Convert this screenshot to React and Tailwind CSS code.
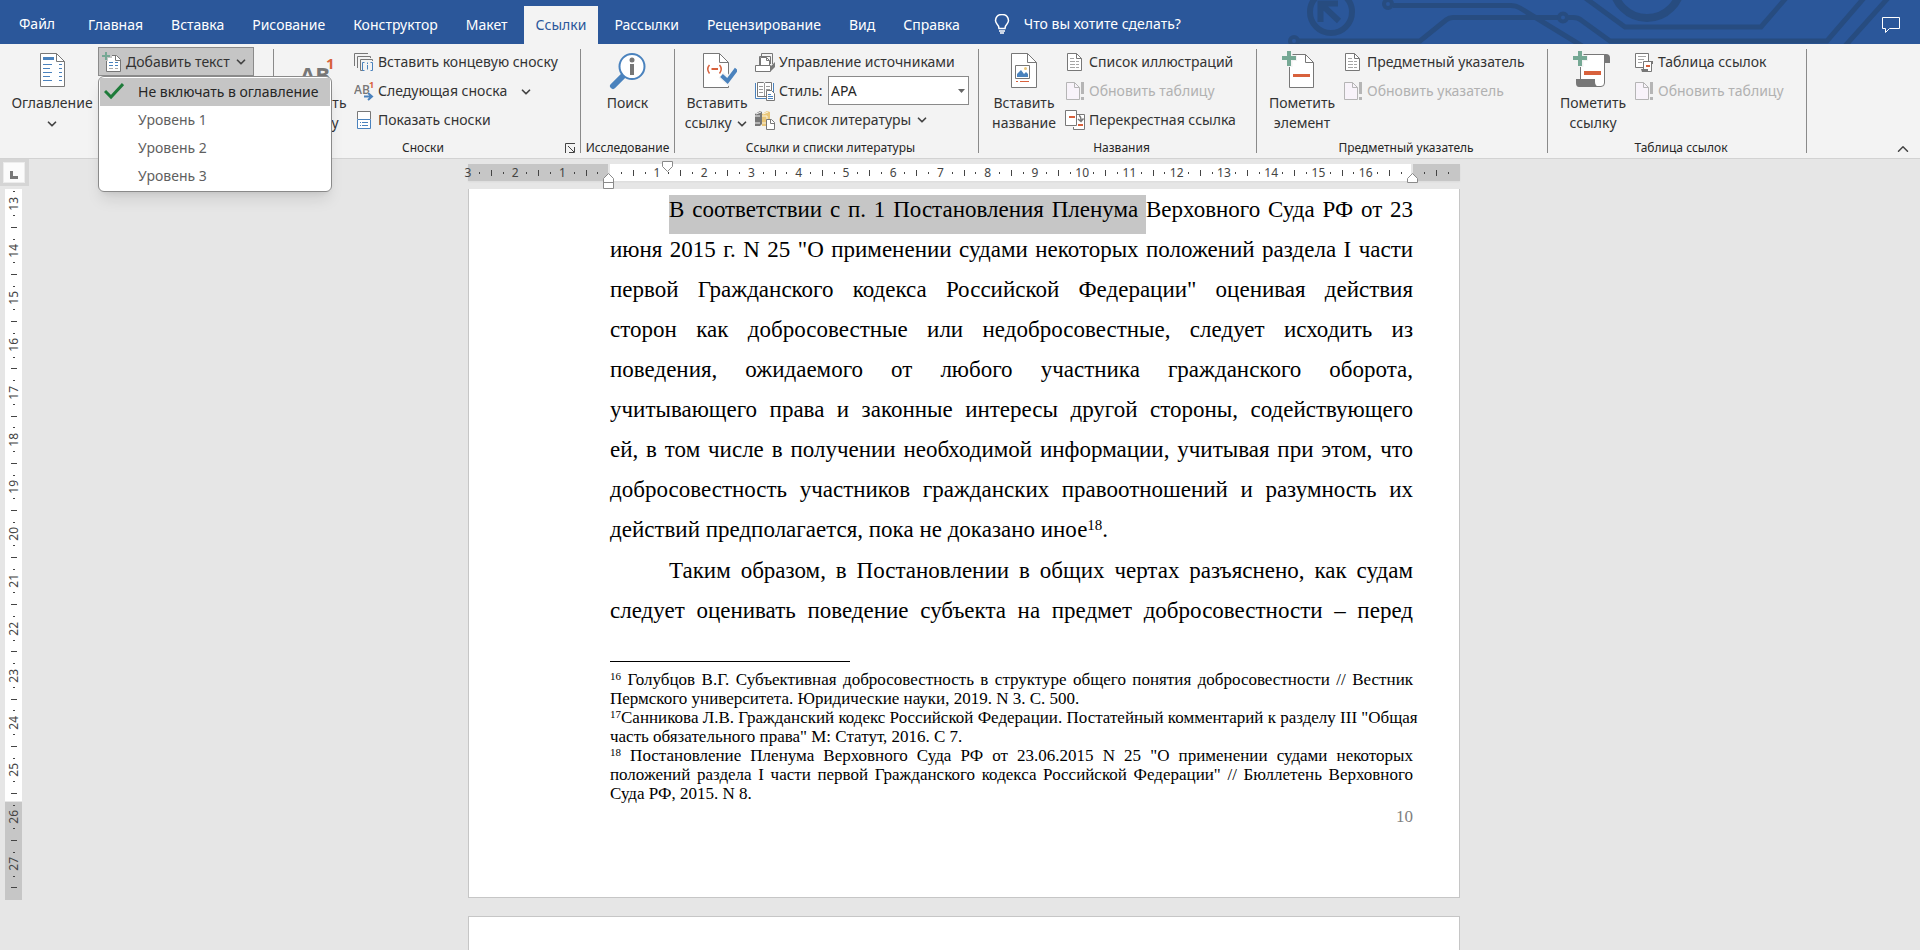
import { ChevronDown, ChevronUp } from "lucide-react";

const GRAY = "#777777";
const BLUE = "#4a82bd";
const RED = "#d8613c";
const GREEN = "#75a894";

const tabs = [
  "Главная",
  "Вставка",
  "Рисование",
  "Конструктор",
  "Макет",
  "Ссылки",
  "Рассылки",
  "Рецензирование",
  "Вид",
  "Справка",
];

const levels = ["Не включать в оглавление", "Уровень 1", "Уровень 2", "Уровень 3"];

const firstParagraph = [
  'июня 2015 г. N 25 "О применении судами некоторых положений раздела I части',
  'первой Гражданского кодекса Российской Федерации" оценивая действия',
  "сторон как добросовестные или недобросовестные, следует исходить из",
  "поведения, ожидаемого от любого участника гражданского оборота,",
  "учитывающего права и законные интересы другой стороны, содействующего",
  "ей, в том числе в получении необходимой информации, учитывая при этом, что",
  "добросовестность участников гражданских правоотношений и разумность их",
];

const footnotes = [
  {
    number: "16",
    lines: [
      { text: " Голубцов В.Г. Субъективная добросовестность в структуре общего понятия добросовестности // Вестник", justify: true },
      { text: "Пермского университета. Юридические науки, 2019. N 3. С. 500." },
    ],
  },
  {
    number: "17",
    lines: [
      { text: 'Санникова Л.В. Гражданский кодекс Российской Федерации. Постатейный комментарий к разделу III "Общая' },
      { text: 'часть обязательного права" М: Статут, 2016. С 7.' },
    ],
  },
  {
    number: "18",
    lines: [
      { text: ' Постановление Пленума Верховного Суда РФ от 23.06.2015 N 25 "О применении судами некоторых', justify: true },
      { text: 'положений раздела I части первой Гражданского кодекса Российской Федерации" // Бюллетень Верховного', justify: true },
      { text: "Суда РФ, 2015. N 8." },
    ],
  },
];

/* ---------- icons ---------- */

function Icon({ size = 20, children }) {
  return (
    <svg width={size} height={size} viewBox={`0 0 ${size} ${size}`} fill="none" className="shrink-0" aria-hidden="true">
      {children}
    </svg>
  );
}

function TocIcon() {
  return (
    <Icon size={40}>
      <path d="M8.5 3.5H24.5L32.5 11.5V36.5H8.5Z" fill="#fff" stroke={GRAY} />
      <path d="M24.5 3.5V11.5H32.5" stroke={GRAY} />
      <path d="M11 7H22V10H11Z" fill={BLUE} />
      <path d="M11 14.5H20M11 18.5H18M11 22.5H20M11 26.5H18M11 30.5H20M27 14.5H30M27 18.5H30M27 22.5H30M27 26.5H30M27 30.5H30" stroke={BLUE} />
    </Icon>
  );
}

function AddTextIcon() {
  return (
    <Icon>
      <path d="M4.5 3.5H14.5L18.5 7.5V19.5H4.5Z" fill="#fff" stroke={GRAY} />
      <path d="M13.5 3.5V8.5H18.5" stroke={GRAY} />
      <path d="M7 10.5H11M13 10.5H16M7 13.5H11M13 13.5H16" stroke={BLUE} />
      <path d="M7 16.5H11M13 16.5H16" stroke="#aaa" />
      <path d="M0 4H10M4 0V9" stroke="#c5c5c5" strokeWidth="4" />
      <path d="M0 4H8M4 0V8" stroke={GREEN} strokeWidth="2" />
    </Icon>
  );
}

function FootnoteIcon() {
  return (
    <Icon size={40}>
      <text x="4" y="33" fontSize="22" fontWeight="700" fill={GRAY} fontFamily="Open Sans, sans-serif">AB</text>
      <text x="30" y="19" fontSize="15" fontWeight="700" fill={RED} fontFamily="Open Sans, sans-serif">1</text>
    </Icon>
  );
}

function EndnoteIcon() {
  return (
    <Icon>
      <path d="M0.5 14V1.5H14M3.5 16V4.5H16.5V6M9 18.5H6.5V7.5H18.5V9" stroke={GRAY} />
      <path d="M10.5 10.5H8.5V18.5H10.5M16.5 10.5H18.5V18.5H16.5" stroke={BLUE} />
      <path d="M13.5 13V17.5M13.5 10.5V12" stroke={BLUE} />
    </Icon>
  );
}

function NextNoteIcon() {
  return (
    <Icon>
      <text x="0" y="13" fontSize="12" fontWeight="600" fill={GRAY} fontFamily="Open Sans, sans-serif">AB</text>
      <text x="15" y="7" fontSize="9" fontWeight="700" fill={RED} fontFamily="Open Sans, sans-serif">1</text>
      <path d="M9 15.5H18M14 12L18 15.5L14 19" stroke="#f3f3f3" strokeWidth="4" />
      <path d="M10 15.5H18M14 12L18 15.5L14 19" stroke={BLUE} strokeWidth="2" />
    </Icon>
  );
}

function ShowNotesIcon() {
  return (
    <Icon>
      <path d="M3.5 9V1.5H16.5V9" fill="#fff" stroke={GRAY} />
      <path d="M3.5 9.5H16.5V18.5H3.5Z" fill="#fff" stroke={BLUE} />
      <path d="M6 12.5H7M8 12.5H14M6 15.5H7M8 15.5H14" stroke={BLUE} />
    </Icon>
  );
}

function SearchInfoIcon() {
  return (
    <Icon size={40}>
      <path d="M15 26L5 36" stroke={BLUE} strokeWidth="6" strokeLinecap="round" />
      <circle cx="24" cy="16.5" r="12.5" fill="#fff" stroke={BLUE} strokeWidth="2" />
      <circle cx="24" cy="10" r="2.5" fill={GRAY} />
      <path d="M22 14H26V25H22Z" fill={GRAY} />
    </Icon>
  );
}

function CitationIcon() {
  return (
    <Icon size={40}>
      <path d="M6.5 3.5H22.5L31.5 12.5V37.5H6.5Z" fill="#fff" stroke={GRAY} />
      <path d="M22.5 3.5V12.5H31.5" stroke={GRAY} />
      <path d="M12.5 15Q9 19 12.5 23.5M22.5 15Q26 19 22.5 23.5" stroke={RED} strokeWidth="1.5" />
      <path d="M14.5 19H21" stroke={RED} strokeWidth="2" />
      <path d="M24 25L31 31L40 18" stroke="#f3f3f3" strokeWidth="7" />
      <path d="M24.5 25.5L30.5 31L39.5 19" stroke={BLUE} strokeWidth="4" />
    </Icon>
  );
}

function SourcesIcon() {
  return (
    <Icon>
      <path d="M6.5 5V1.5H17.5V12M4.5 13V4.5H15.5V12" stroke={GRAY} />
      <path d="M5.5 14V5.5H11.5L14.5 8.5V14" fill="#fff" stroke={GRAY} />
      <path d="M11.5 5.5V8.5H14.5" stroke={GRAY} />
      <path d="M0.5 13.5H15.5V19.5H0.5Z" fill="#fff" stroke={GRAY} />
      <path d="M16 14L20 10V15L16 19Z" fill={GRAY} />
    </Icon>
  );
}

function StyleIcon() {
  return (
    <Icon>
      <path d="M0.5 2V17.5H18.5V2" fill="#fff" stroke={BLUE} />
      <path d="M2.5 1.5H8.5L9.5 2.5L10.5 1.5H16.5V15.5H2.5Z" fill="#fff" stroke={GRAY} />
      <path d="M9.5 3V15M4 5.5H8M4 8.5H8M4 11.5H8M11 5.5H15M11 8.5H15" stroke="#999" />
      <path d="M11.5 9.5H16.5L19.5 12.5V19.5H11.5Z" fill="#fff" stroke={GRAY} />
      <path d="M13 13.5H16M13 15.5H18M13 17.5H18" stroke={BLUE} />
    </Icon>
  );
}

function BibliographyIcon() {
  return (
    <Icon>
      <path d="M0 4L5 1L7 2V14L5 16H0Z" fill={GRAY} />
      <path d="M1 4L6 2M0 6H5M0 13H5" stroke="#f3f3f3" />
      <path d="M7 4L12 1L15 2V12L12 16H7Z" fill="#e9c679" />
      <path d="M8 4L13 2M7 6H12M7 13H11M12 6V10" stroke="#fbf3e0" />
      <path d="M11.5 9.5H16.5L19.5 12.5V19.5H11.5Z" fill="#fff" stroke={GRAY} />
      <path d="M15.5 9.5V13.5H19.5" stroke={GRAY} />
    </Icon>
  );
}

function CaptionIcon() {
  return (
    <Icon size={40}>
      <path d="M7.5 3.5H23.5L32.5 12.5V37.5H7.5Z" fill="#fff" stroke={GRAY} />
      <path d="M23.5 3.5V12.5H32.5" stroke={GRAY} />
      <path d="M11.5 15.5H25.5V28.5H11.5Z" stroke={GRAY} />
      <path d="M13 27V24L17 20L20 24L22 22L24 24V27Z" fill={BLUE} />
      <circle cx="21.5" cy="18.5" r="1.5" fill="#e9c679" />
      <path d="M12 31.5H14M16 31.5H25" stroke={RED} />
    </Icon>
  );
}

function ListPageIcon() {
  return (
    <Icon>
      <path d="M2.5 1.5H11.5L16.5 6.5V18.5H2.5Z" fill="#fff" stroke={GRAY} />
      <path d="M11.5 1.5V6.5H16.5" stroke={GRAY} />
      <path d="M5 6.5H9M5 9.5H10M11 9.5H14M5 12.5H10M11 12.5H14M5 15.5H10M11 15.5H14" stroke="#a5a5a5" />
    </Icon>
  );
}

function RefreshPageIcon() {
  return (
    <Icon>
      <path d="M1.5 1.5H9.5L14.5 6.5V18.5H1.5Z" fill="#f8f3fa" stroke="#b5b5b5" />
      <path d="M9.5 1.5V6.5H14.5" stroke="#b5b5b5" />
      <path d="M16 1H19V13H16ZM16 16H19V19H16Z" fill="#b5b5b5" />
    </Icon>
  );
}

function CrossRefIcon() {
  return (
    <Icon>
      <path d="M9.5 4.5H19.5V19.5H8.5V17" fill="#fff" stroke={GRAY} />
      <path d="M0.5 0.5H11.5V15.5H0.5Z" fill="#fff" stroke={GRAY} />
      <path d="M4 7H10M13 15H18" stroke={RED} strokeWidth="2" />
      <path d="M14 5.5Q16 6 16 11M13 9L16 11.5L18.5 8.5" stroke={GRAY} strokeWidth="1.5" />
    </Icon>
  );
}

function MarkEntryIcon() {
  return (
    <Icon size={40}>
      <path d="M7.5 4.5H23.5L31.5 12.5V37.5H7.5Z" fill="#fff" stroke={GRAY} />
      <path d="M23.5 4.5V12.5H31.5" stroke={GRAY} />
      <path d="M11 25.5H28" stroke={RED} strokeWidth="3" />
      <path d="M0 8H15M7.5 0V17" stroke="#f3f3f3" strokeWidth="6" />
      <path d="M0 8H14M7 1V16" stroke={GREEN} strokeWidth="4" />
    </Icon>
  );
}

function MarkCitationIcon() {
  return (
    <Icon size={40}>
      <path d="M30 4H33Q37 4 37 8V13H32Z" fill={GRAY} />
      <path d="M7.5 30V4.5H31.5V33Q31.5 36.5 28 36.5H20Z" fill="#fff" stroke={GRAY} />
      <path d="M3 29H22V32Q22 36 26 37H6Q3 37 3 33Z" fill={GRAY} />
      <path d="M11 23H28" stroke={RED} strokeWidth="4" />
      <path d="M0 8H15M7.5 0V17" stroke="#f3f3f3" strokeWidth="6" />
      <path d="M0 8H14M7 1V16" stroke={GREEN} strokeWidth="4" />
    </Icon>
  );
}

function AuthoritiesIcon() {
  return (
    <Icon>
      <path d="M1.5 1.5H14.5V15.5H1.5Z" fill="#fff" stroke={GRAY} />
      <path d="M4 4.5H12M4 7.5H10M4 10.5H8" stroke="#a5a5a5" />
      <path d="M9.5 17V9.5H17.5V19.5H10" fill="#fff" stroke={GRAY} />
      <path d="M17 9H19V12H17ZM7 17H14V20H8Z" fill={GRAY} />
      <path d="M12 14H16" stroke={RED} strokeWidth="2" />
    </Icon>
  );
}

function CheckIcon() {
  return (
    <Icon>
      <path d="M1 9L7 15L19 2" stroke="#1e7b3a" strokeWidth="3" />
    </Icon>
  );
}

function BulbIcon() {
  return (
    <Icon>
      <path d="M7 14.5Q7 12 5 10Q3.5 8 3.5 6.5Q4 0.5 10 0.5Q16 0.5 16.5 6.5Q16.5 8 15 10Q13 12 13 14.5Z" stroke="#fff" strokeWidth="1.5" />
      <path d="M7 17H13M8 19H12" stroke="#fff" strokeWidth="1.5" />
    </Icon>
  );
}

/* ---------- title bar ---------- */

function CircuitArt() {
  return (
    <svg width="640" height="44" viewBox="1280 0 640 44" fill="none" stroke="#274c80" strokeWidth="5" className="absolute top-0 right-0" aria-hidden="true">
      <circle cx="1331" cy="12" r="21" strokeWidth="6" />
      <path d="M1338 3.5H1320.5V22M1321 4L1339 21" strokeWidth="6" />
      <circle cx="1388" cy="4" r="4" strokeWidth="4" />
      <path d="M1393 5.5H1511Q1516 5.5 1520 8L1582 46" />
      <circle cx="1294" cy="41" r="4" strokeWidth="4" />
      <path d="M1299 41H1420L1446 20Q1449 17.5 1453 17.5H1558" />
      <circle cx="1563" cy="17.5" r="4" strokeWidth="4" />
      <path d="M1568 17.5H1573Q1578 17.5 1581 20L1610 41H1827L1864 -2" />
      <path d="M1584 -3L1625 27H1761L1786 -2M1845 46L1888 -2" />
      <circle cx="1647" cy="-16" r="34" strokeWidth="8" />
    </svg>
  );
}

function TitleBar() {
  return (
    <header className="relative h-11 bg-[#2b579a] text-white">
      <CircuitArt />
      <div className="relative flex h-full items-stretch pt-1.5 text-sm">
        <button type="button" className="w-[76px] pr-0.5 pb-0.5">Файл</button>
        <nav className="flex gap-1">
          {tabs.map((tab) => (
            <button
              key={tab}
              type="button"
              className={tab === "Ссылки" ? "bg-[#f3f3f3] px-3 text-[#2b579a]" : "px-3"}
            >
              {tab}
            </button>
          ))}
        </nav>
        <button type="button" className="ml-5 flex items-center gap-3 pb-0.5">
          <BulbIcon />
          Что вы хотите сделать?
        </button>
        <button type="button" aria-label="Примечания" className="mr-5 ml-auto">
          <svg width="18" height="18" viewBox="0 0 18 18" fill="none" stroke="#fff" aria-hidden="true">
            <path d="M0.5 1.5H17.5V12.5H7.5L3.5 16.5V12.5H0.5Z" />
          </svg>
        </button>
      </div>
    </header>
  );
}

/* ---------- ribbon ---------- */

function Chevron() {
  return <ChevronDown size={14} strokeWidth={3} className="inline shrink-0 text-[#444]" />;
}

function Group({ title, width, launcher, children }) {
  return (
    <>
      <section className={`flex flex-col pt-[3px] ${width}`}>
        <div className="flex h-[87px] items-start gap-1">{children}</div>
        <div className="mt-1 flex h-5 items-center text-xs text-[#262626]">
          <span className="flex-1 text-center">{title}</span>
          {launcher && (
            <button type="button" aria-label="Параметры сносок" className="pr-1">
              <svg width="12" height="12" viewBox="0 0 12 12" fill="none" stroke="#444" aria-hidden="true">
                <path d="M1.5 11V1.5H11M4 4L10 10M10.5 5V10.5H5" />
              </svg>
            </button>
          )}
        </div>
      </section>
      <div className="my-[5px] w-px bg-[#8a8a8a]" />
    </>
  );
}

function BigButton({ icon, width, children }) {
  return (
    <button type="button" className={`flex shrink-0 flex-col items-center gap-[3px] pt-[3px] leading-5 ${width}`}>
      {icon}
      <span className="whitespace-nowrap">{children}</span>
    </button>
  );
}

function SmallButton({ icon, label, disabled, children }) {
  return (
    <button
      type="button"
      disabled={disabled}
      className="flex h-[29px] items-center gap-1 whitespace-nowrap disabled:text-[#b1b1b1]"
    >
      {icon}
      {label}
      {children}
    </button>
  );
}

function AddTextMenu() {
  return (
    <ul
      role="menu"
      className="absolute top-[29px] left-0 z-10 w-[234px] rounded-md border border-[#8a8a8a] bg-white p-px shadow-lg"
    >
      {levels.map((level, index) => (
        <li key={level} role="none">
          <button
            type="button"
            role="menuitemradio"
            aria-checked={index === 0}
            className={`flex h-7 w-full items-center gap-3.5 pl-1 whitespace-nowrap ${
              index === 0 ? "bg-[#c5c5c5] text-[#262626]" : "text-[#5f5f5f]"
            }`}
          >
            <span className="w-5">{index === 0 && <CheckIcon />}</span>
            {level}
          </button>
        </li>
      ))}
    </ul>
  );
}

function Ribbon() {
  return (
    <div className="flex h-[115px] border-b border-[#d2d2d2] bg-[#f3f3f3] text-sm text-[#333]">
      <Group width="w-[273px] pl-2.5">
        <BigButton icon={<TocIcon />} width="w-[84px]">
          Оглавление
          <br />
          <Chevron />
        </BigButton>
        <div className="relative">
          <button
            type="button"
            aria-haspopup="menu"
            aria-expanded="true"
            className="flex h-[29px] w-[156px] items-center gap-1 border border-[#8a8a8a] bg-[#c5c5c5] pl-[3px] whitespace-nowrap"
          >
            <AddTextIcon />
            Добавить текст
            <Chevron />
          </button>
          <AddTextMenu />
        </div>
      </Group>

      <Group title="Сноски" width="w-[306px] pl-2" launcher>
        <BigButton icon={<FootnoteIcon />} width="w-[68px]">
          Вставить
          <br />
          сноску
        </BigButton>
        <div>
          <SmallButton icon={<EndnoteIcon />} label="Вставить концевую сноску" />
          <SmallButton icon={<NextNoteIcon />} label="Следующая сноска">
            <span className="ml-2"><Chevron /></span>
          </SmallButton>
          <SmallButton icon={<ShowNotesIcon />} label="Показать сноски" />
        </div>
      </Group>

      <Group title="Исследование" width="w-[93px]">
        <BigButton icon={<SearchInfoIcon />} width="w-full">Поиск</BigButton>
      </Group>

      <Group title="Ссылки и списки литературы" width="w-[303px] pl-2">
        <BigButton icon={<CitationIcon />} width="w-[68px]">
          Вставить
          <br />
          ссылку <Chevron />
        </BigButton>
        <div>
          <SmallButton icon={<SourcesIcon />} label="Управление источниками" />
          <div className="flex h-[29px] items-center gap-1">
            <StyleIcon />
            <label htmlFor="citation-style" className="w-[45px]">Стиль:</label>
            <div className="grid w-[141px] items-center">
              <select
                id="citation-style"
                className="col-start-1 row-start-1 h-[29px] appearance-none border border-[#8a8a8a] bg-white pl-0.5 text-[#262626]"
              >
                <option>APA</option>
              </select>
              <svg width="7" height="4" viewBox="0 0 7 4" className="pointer-events-none col-start-1 row-start-1 mr-1 justify-self-end" aria-hidden="true">
                <path d="M0 0H7L3.5 4Z" fill="#666" />
              </svg>
            </div>
          </div>
          <SmallButton icon={<BibliographyIcon />} label="Список литературы">
            <Chevron />
          </SmallButton>
        </div>
      </Group>

      <Group title="Названия" width="w-[277px] pl-2">
        <BigButton icon={<CaptionIcon />} width="w-[74px]">
          Вставить
          <br />
          название
        </BigButton>
        <div>
          <SmallButton icon={<ListPageIcon />} label="Список иллюстраций" />
          <SmallButton icon={<RefreshPageIcon />} label="Обновить таблицу" disabled />
          <SmallButton icon={<CrossRefIcon />} label="Перекрестная ссылка" />
        </div>
      </Group>

      <Group title="Предметный указатель" width="w-[290px] pl-2">
        <BigButton icon={<MarkEntryIcon />} width="w-[74px]">
          Пометить
          <br />
          элемент
        </BigButton>
        <div>
          <SmallButton icon={<ListPageIcon />} label="Предметный указатель" />
          <SmallButton icon={<RefreshPageIcon />} label="Обновить указатель" disabled />
        </div>
      </Group>

      <Group title="Таблица ссылок" width="w-[258px] pl-2">
        <BigButton icon={<MarkCitationIcon />} width="w-[74px]">
          Пометить
          <br />
          ссылку
        </BigButton>
        <div>
          <SmallButton icon={<AuthoritiesIcon />} label="Таблица ссылок" />
          <SmallButton icon={<RefreshPageIcon />} label="Обновить таблицу" disabled />
        </div>
      </Group>

      <button type="button" aria-label="Свернуть ленту" className="mr-2 ml-auto self-end">
        <ChevronUp size={18} className="text-[#444]" />
      </button>
    </div>
  );
}

/* ---------- rulers ---------- */

// One cell per quarter of a centimetre: number, dot, dash, dot.
function Ticks({ from, to, hidden = [], vertical }) {
  const cells = [];
  for (let q = from; q <= to; q++) cells.push(q);

  return cells.map((q) => {
    const part = Math.abs(q) % 4;
    let mark = null;
    if (part === 0 && !hidden.includes(q)) {
      mark = (
        <span className={vertical ? "rotate-180 [writing-mode:vertical-rl]" : ""}>{Math.abs(q) / 4}</span>
      );
    } else if (part === 2) {
      mark = <span className={vertical ? "h-px w-1.5 bg-[#444]" : "h-1.5 w-px bg-[#444]"} />;
    } else if (part !== 0) {
      mark = <span className={vertical ? "h-px w-0.5 bg-[#444]" : "h-0.5 w-px bg-[#444]"} />;
    }
    return (
      <span key={q} className="flex min-h-0 min-w-0 flex-1 basis-0 items-center justify-center">
        {mark}
      </span>
    );
  });
}

function HorizontalRuler() {
  return (
    <div className="relative mt-[5px] grid h-4 w-[1004px] text-xs leading-[17px] text-[#444]">
      <div className="col-start-1 row-start-1 ml-1.5 mr-1.5 flex gap-0.5 shadow-xs">
        <div className="w-[140px] bg-[#c6c6c6]" />
        <div className="flex-1 bg-white" />
        <div className="w-[47px] bg-[#c6c6c6]" />
      </div>
      <div className="col-start-1 row-start-1 mr-3 flex">
        <Ticks from={-12} to={71} hidden={[0, 68]} />
      </div>
      <svg width="12" height="11" viewBox="0 0 12 11" className="absolute -top-[3px] left-[200px]" aria-hidden="true">
        <path d="M0.5 0.5H10.5V5.5L5.5 10.5L0.5 5.5Z" fill="#fff" stroke="#8a8a8a" />
      </svg>
      <svg width="12" height="17" viewBox="0 0 12 17" className="absolute top-[9px] left-[141px]" aria-hidden="true">
        <path d="M0.5 15.5V5.5L5.5 0.5L10.5 5.5V15.5ZM0.5 9.5H10.5" fill="#fff" stroke="#8a8a8a" />
      </svg>
      <svg width="12" height="11" viewBox="0 0 12 11" className="absolute top-[9px] left-[945px]" aria-hidden="true">
        <path d="M0.5 9.5V5.5L5.5 0.5L10.5 5.5V9.5Z" fill="#fff" stroke="#8a8a8a" />
      </svg>
    </div>
  );
}

function VerticalRuler() {
  return (
    <aside className="w-[29px] shrink-0">
      <button type="button" aria-label="Позиция табуляции" className="flex h-[27px] w-full items-center bg-[#d5d5d5] pl-[3px]">
        <span className="flex h-[21px] w-[22px] items-center justify-center border border-[#ececec] bg-[#fbfbfb]">
          <svg width="8" height="8" viewBox="0 0 8 8" className="mt-1" aria-hidden="true">
            <path d="M1.5 0V6.5H8" stroke="#777" strokeWidth="3" fill="none" />
          </svg>
        </span>
      </button>
      <div className="ml-[5px] grid h-[714px] w-[17px] text-xs leading-4 text-[#444]">
        <div className="col-start-1 row-start-1 mt-[3px] flex flex-col gap-px">
          <div className="flex-1 bg-white" />
          <div className="h-[98px] bg-[#c6c6c6]" />
        </div>
        <div className="col-start-1 row-start-1 mb-1.5 ml-px flex flex-col">
          <Ticks from={51} to={110} vertical />
        </div>
      </div>
    </aside>
  );
}

/* ---------- document ---------- */

const full = "[text-align-last:justify]";

function Footnote({ number, lines }) {
  return (
    <li>
      {lines.map((line, index) => (
        <span key={line.text} className={`block whitespace-nowrap ${line.justify ? full : ""}`}>
          {index === 0 && <sup className="text-[11px] leading-none">{number}</sup>}
          {line.text}
        </span>
      ))}
    </li>
  );
}

function Page() {
  return (
    <article className="h-[709px] w-[992px] border border-t-0 border-[#c6c6c6] bg-white pr-[46px] pl-[141px] font-['Liberation_Serif','Times_New_Roman',serif] text-black">
      <div className="pt-px text-[23px] leading-10">
        <p>
          <span className={`block pl-[59px] ${full}`}>
            <mark className="bg-[#c6c6c6] pt-0.5 pb-3 text-black">В соответствии с п. 1 Постановления Пленума </mark>
            Верховного Суда РФ от 23
          </span>
          {firstParagraph.map((line) => (
            <span key={line} className={`block ${full}`}>{line}</span>
          ))}
          <span className="block">
            действий предполагается, пока не доказано иное
            <sup className="text-[15px] leading-none">18</sup>.
          </span>
        </p>
        <p className="mt-px">
          <span className={`block pl-[59px] ${full}`}>Таким образом, в Постановлении в общих чертах разъяснено, как судам</span>
          <span className={`block ${full}`}>следует оценивать поведение субъекта на предмет добросовестности – перед</span>
        </p>
      </div>
      <hr className="mt-[30px] w-60 border-black" />
      <ol className="mt-2 text-[17px] leading-[19px]">
        {footnotes.map((note) => (
          <Footnote key={note.number} {...note} />
        ))}
      </ol>
      <div className="mt-0.5 text-right text-[17px] leading-6 text-[#7f7f7f]">10</div>
    </article>
  );
}

export default function App() {
  return (
    <div className="flex h-screen flex-col overflow-hidden bg-[#e6e6e6] font-['Noto_Sans','Segoe_UI',sans-serif]">
      <TitleBar />
      <Ribbon />
      <main className="flex min-h-0 flex-1">
        <VerticalRuler />
        <div className="flex flex-1 flex-col items-center overflow-hidden pr-[21px]">
          <HorizontalRuler />
          <div className="mt-[9px]">
            <Page />
            <div className="mt-[18px] h-40 w-[992px] border border-[#c6c6c6] bg-white" />
          </div>
        </div>
      </main>
    </div>
  );
}
